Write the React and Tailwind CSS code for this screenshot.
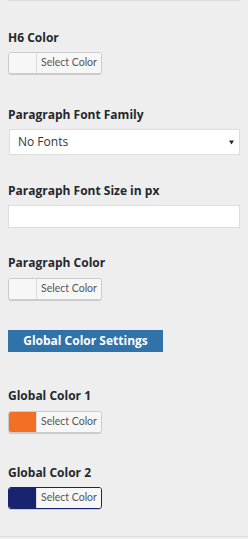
import React from "react";

function ColorButton({ swatch, border = "border-[#cccccc]" }) {
  return (
    <div
      className={`flex h-[22px] w-[94px] overflow-hidden rounded-[3px] border ${border} shadow-[0_1px_0_#cccccc]`}
    >
      <div className="w-[27px] h-full" style={{ backgroundColor: swatch }} />
      <div
        className="flex-1 flex items-center justify-center border-l border-[#dddddd] bg-[#f7f7f7] text-[10.5px] text-[#555555]"
        style={{ fontFamily: 'Lato, "Open Sans", sans-serif' }}
      >
        Select Color
      </div>
    </div>
  );
}

function Label({ children, mt }) {
  return (
    <div className={`${mt} text-[12px] font-bold leading-[16px] text-[#23282d]`}>{children}</div>
  );
}

export default function App() {
  return (
    <div
      className="w-[248px] h-[539px] overflow-hidden bg-[#eeeeee] px-2"
      style={{ fontFamily: '"Open Sans", "Noto Sans", sans-serif' }}
    >
      <div className="-mt-[23px] h-[24px] w-[232px] border border-[#dddddd] bg-white" />

      <Label mt="mt-[29px]">H6 Color</Label>
      <div className="mt-[6px]">
        <ColorButton swatch="#f7f7f7" />
      </div>

      <Label mt="mt-[33px]">Paragraph Font Family</Label>
      <div className="mt-[6px] ml-[1px] flex h-[26px] w-[231px] items-center justify-between border border-[#dddddd] bg-white pl-[8px] pr-[5px] text-[12px] text-[#32373c]">
        <span>No Fonts</span>
        <svg width="5" height="5" viewBox="0 0 5 5">
          <path d="M0 0.5 H5 L2.5 4.5 Z" fill="#23282d" />
        </svg>
      </div>

      <Label mt="mt-[28px]">Paragraph Font Size in px</Label>
      <div className="mt-[6px] h-[23px] w-[232px] border border-[#dddddd] bg-white" />

      <Label mt="mt-[27px]">Paragraph Color</Label>
      <div className="mt-[7px]">
        <ColorButton swatch="#f7f7f7" />
      </div>

      <div className="mt-[30px] flex h-[22px] w-[155px] items-center justify-center bg-[#3172a9] text-[12px] font-bold text-white">
        Global Color Settings
      </div>

      <Label mt="mt-[36px]">Global Color 1</Label>
      <div className="mt-[7px]">
        <ColorButton swatch="#f36f26" />
      </div>

      <Label mt="mt-[32px]">Global Color 2</Label>
      <div className="mt-[6px]">
        <ColorButton swatch="#18246f" border="border-[#18246f]" />
      </div>

      <div className="-mx-2 mt-[27px] h-px bg-[#dddddd]" />
    </div>
  );
}
